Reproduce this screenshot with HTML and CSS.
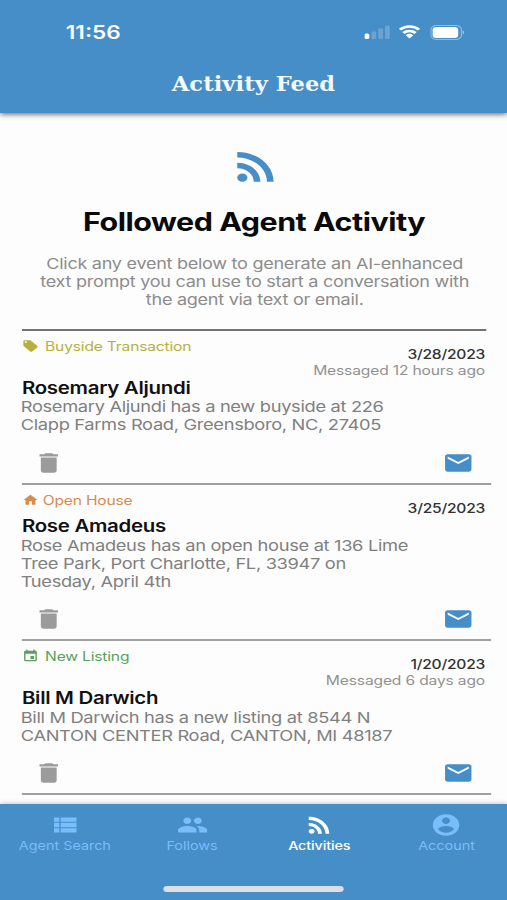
FILE: index.html
```html
<!doctype html>
<html lang="en">
<head>
<meta charset="utf-8">
<meta name="viewport" content="width=device-width,initial-scale=1">
<title>Activity Feed</title>
<link rel="stylesheet" href="styles.css">
</head>
<body>

<svg class="symbols" width="0" height="0">
	<symbol id="rss" viewBox="0 0 24 24"><circle cx="6.18" cy="17.82" r="2.18"/><path d="M4 4.44v2.83c7.03 0 12.73 5.7 12.73 12.73h2.83c0-8.59-6.97-15.56-15.56-15.56zm0 5.66v2.83c3.9 0 7.07 3.17 7.07 7.07h2.83c0-5.47-4.43-9.9-9.9-9.9z"/></symbol>
	<symbol id="trash" viewBox="0 0 24 24"><path d="M6 19c0 1.1.9 2 2 2h8c1.1 0 2-.9 2-2V7H6v12zM19 4h-3.500l-1-1h-5l-1 1H5v2h14V4z"/></symbol>
	<symbol id="mail" viewBox="0 0 24 24"><path d="M20 4H4c-1.100 0-2 .9-2 2v12c0 1.100.9 2 2 2h16c1.100 0 2-.9 2-2V6c0-1.100-.9-2-2-2zm0 4l-8 5-8-5V6l8 5 8-5v2z"/></symbol>
	<symbol id="tag" viewBox="0 0 24 24"><path d="M21.410 11.580l-9-9C12.050 2.220 11.550 2 11 2H4c-1.100 0-2 .9-2 2v7c0 .55.22 1.050.59 1.420l9 9c.36.36.86.58 1.410.58.55 0 1.050-.22 1.410-.59l7-7c.37-.36.59-.86.59-1.410 0-.55-.23-1.060-.59-1.420zM5.500 7C4.670 7 4 6.330 4 5.500S4.670 4 5.500 4 7 4.670 7 5.500 6.330 7 5.500 7z"/></symbol>
	<symbol id="home" viewBox="0 0 24 24"><path d="M10 20v-6h4v6h5v-8h3L12 3 2 12h3v8z"/></symbol>
	<symbol id="event" viewBox="0 0 24 24"><path d="M17 12h-5v5h5v-5zM16 1v2H8V1H6v2H5c-1.110 0-2 .9-2 2v14c0 1.100.89 2 2 2h14c1.100 0 2-.9 2-2V5c0-1.100-.9-2-2-2h-1V1h-2zm3 18H5V8h14v11z"/></symbol>
	<symbol id="list" viewBox="0 0 24 24"><path d="M4 14h4v-4H4v4zm0 5h4v-4H4v4zM4 9h4V5H4v4zm5 5h12v-4H9v4zm0 5h12v-4H9v4zM9 5v4h12V5H9z"/></symbol>
	<symbol id="people" viewBox="0 0 24 24"><path d="M16 11c1.660 0 2.990-1.340 2.990-3S17.660 5 16 5s-3 1.340-3 3 1.340 3 3 3zm-8 0c1.660 0 2.990-1.340 2.990-3S9.660 5 8 5 5 6.340 5 8s1.340 3 3 3zm0 2c-2.330 0-7 1.170-7 3.500V19h14v-2.500C15 14.170 10.330 13 8 13zm8 0c-.29 0-.62.02-.97.05 1.160.84 1.970 1.970 1.970 3.450V19h6v-2.500c0-2.330-4.670-3.500-7-3.500z"/></symbol>
	<symbol id="account" viewBox="0 0 24 24"><path d="M12 2C6.480 2 2 6.480 2 12s4.480 10 10 10 10-4.480 10-10S17.520 2 12 2zm0 3c1.660 0 3 1.340 3 3s-1.340 3-3 3-3-1.340-3-3 1.340-3 3-3zm0 14.200c-2.500 0-4.710-1.280-6-3.220.03-1.990 4-3.080 6-3.080 1.990 0 5.970 1.090 6 3.080-1.290 1.940-3.500 3.220-6 3.220z"/></symbol>
</svg>

<div class="screen">

	<header class="top">
		<div class="status">
			<span class="time">11:56</span>
			<svg class="signal" viewBox="0 0 21 14" width="21" height="14">
				<rect x="0" y="8.500" width="4" height="5.500" rx="1.500"/>
				<g opacity=".2">
					<rect x="5.800" y="6.500" width="3.800" height="7.500" rx="1.200"/>
					<rect x="11.400" y="3.500" width="3.800" height="10.500" rx="1.200"/>
					<rect x="17" y="0.500" width="3.800" height="13.500" rx="1.200"/>
				</g>
			</svg>
			<svg class="wifi" viewBox="0 0 18 14" width="18" height="14">
				<path class="arc" d="M1.200 4.700a11 11 0 0 1 15.600 0M4 8a7.200 7.200 0 0 1 10 0"/>
				<path d="M5.900 10.300a4.500 4.500 0 0 1 6.200 0L9 13.600z"/>
			</svg>
			<svg class="battery" viewBox="0 0 28 15" width="28" height="15">
				<rect class="shell" x=".6" y=".6" width="25" height="13.800" rx="4.200"/>
				<rect x="2" y="2" width="21" height="11" rx="3"/>
				<path class="cap" d="M26.600 5.300c1.600.6 1.600 3.800 0 4.400z"/>
			</svg>
		</div>
		<h1 class="title">Activity Feed</h1>
	</header>

	<main class="feed">

		<section class="intro">
			<svg class="logo"><use href="#rss"/></svg>
			<h2>Followed Agent Activity</h2>
			<p>Click any event below to generate an AI-enhanced<br>text prompt you can use to start a conversation with<br>the agent via text or email.</p>
		</section>

		<article class="item">
			<div class="meta">
				<div class="type buyside"><svg><use href="#tag"/></svg>Buyside Transaction</div>
				<div class="when"><b>3/28/2023</b><span class="msg">Messaged 12 hours ago</span></div>
			</div>
			<h3>Rosemary Aljundi</h3>
			<p>Rosemary Aljundi has a new buyside at 226<br>Clapp Farms Road, Greensboro, NC, 27405</p>
			<div class="actions">
				<svg class="trash"><use href="#trash"/></svg>
				<svg class="mail"><use href="#mail"/></svg>
			</div>
		</article>

		<article class="item">
			<div class="meta">
				<div class="type open"><svg><use href="#home"/></svg>Open House</div>
				<div class="when"><b>3/25/2023</b></div>
			</div>
			<h3>Rose Amadeus</h3>
			<p>Rose Amadeus has an open house at 136 Lime<br>Tree Park, Port Charlotte, FL, 33947 on<br>Tuesday, April 4th</p>
			<div class="actions">
				<svg class="trash"><use href="#trash"/></svg>
				<svg class="mail"><use href="#mail"/></svg>
			</div>
		</article>

		<article class="item">
			<div class="meta">
				<div class="type listing"><svg><use href="#event"/></svg>New Listing</div>
				<div class="when"><b>1/20/2023</b><span class="msg">Messaged 6 days ago</span></div>
			</div>
			<h3>Bill M Darwich</h3>
			<p>Bill M Darwich has a new listing at 8544 N<br>CANTON CENTER Road, CANTON, MI 48187</p>
			<div class="actions">
				<svg class="trash"><use href="#trash"/></svg>
				<svg class="mail"><use href="#mail"/></svg>
			</div>
		</article>

	</main>

	<footer class="bottom">
		<nav class="tabs">
			<div class="tab"><svg><use href="#list"/></svg><span>Agent Search</span></div>
			<div class="tab"><svg><use href="#people"/></svg><span>Follows</span></div>
			<div class="tab active"><svg><use href="#rss"/></svg><span>Activities</span></div>
			<div class="tab"><svg><use href="#account"/></svg><span>Account</span></div>
		</nav>
		<div class="homebar"></div>
	</footer>

</div>

</body>
</html>
```
FILE: styles.css
```css
* { box-sizing: border-box; }
body { background: #fdfdfd; font-family: Inter, "Liberation Sans", sans-serif; margin: 0; overflow: hidden; }
h1, h2, h3, p { margin: 0; }
svg { display: block; fill: currentColor; }
.symbols { position: absolute; }

.screen { display: flex; flex-direction: column; height: 900px; transform: scaleX(1.21875); transform-origin: 0 0; width: 416px; }

.top { background: #468ec8; box-shadow: 0 1px 5px rgba(0,0,0,.65); color: #fff; height: 113px; }
.status { align-items: center; display: flex; height: 64px; padding: 0 35px 0 54px; }
.time { flex: 1; font-size: 18.5px; font-weight: 600; }
.wifi { margin: 0 8px 0 7px; }
.arc { fill: none; stroke: #fff; stroke-width: 2.6; }
.shell { fill: none; opacity: .4; stroke: #fff; }
.cap { opacity: .45; }
.title { color: #f4f9ff; font: bold 20.5px/40px "DejaVu Serif Condensed", "DejaVu Serif", serif; letter-spacing: .1px; text-align: center; }

.feed { flex: 1; }
.intro { border-bottom: 2px solid #747474; height: 218px; margin: 0 17px 0 18px; padding-top: 30px; text-align: center; }
.logo { color: #468ec8; height: 47px; margin: 0 auto; padding-left: 2px; width: 48px; }
.intro h2 { color: #0a0a0a; font-size: 25px; font-weight: 700; letter-spacing: -.4px; line-height: 30px; margin-top: 17px; white-space: nowrap; }
.intro p { color: #8c8c8c; font-size: 14.8px; letter-spacing: -.22px; line-height: 18px; margin-top: 18px; padding-left: 1px; white-space: nowrap; }

.item { border-bottom: 2px solid #a0a0a0; margin: 0 13px 0 18px; }
.meta { display: flex; justify-content: space-between; padding-right: 5px; }
.type { display: flex; font-size: 12.8px; gap: 5px; letter-spacing: -.15px; line-height: 16px; padding-top: 8px; }
.type svg { height: 14px; width: 14px; }
.buyside { color: #b8b03a; }
.open { color: #d58c4e; }
.open svg { margin-right: -2px; }
.listing { color: #58a05c; }
.when { color: #919191; font-size: 12.8px; letter-spacing: -.13px; line-height: 16px; padding-top: 16px; text-align: right; }
.when b { color: #333; display: block; font-weight: 500; letter-spacing: -.2px; }
.msg { display: block; }
.item h3 { color: #111; font-size: 16.8px; font-weight: 600; letter-spacing: -.25px; line-height: 18px; }
.item p { color: #808080; font-size: 15px; letter-spacing: -.27px; line-height: 18px; margin-left: -1px; padding-top: 2px; white-space: nowrap; }
.item:nth-child(2) p { margin: -1px 0 1px -1px; }
.actions { align-items: center; display: flex; height: 48px; justify-content: space-between; padding: 8px 14px 0 9px; }
.trash { color: #9b9b9b; height: 26px; width: 26px; }
.mail { color: #468ec8; height: 26px; width: 26px; }

.bottom { background: #468ec8; box-shadow: 0 -1px 4px rgba(0,0,0,.2); color: #7abdfb; height: 96px; }
.tabs { display: grid; grid-template-columns: repeat(4, 104.4px); height: 82px; padding-left: 1px; }
.tab { align-items: center; display: flex; flex-direction: column; font-size: 11.8px; line-height: 16px; padding-top: 8px; }
.tab svg { height: 26px; width: 26px; }
.active { color: #fff; font-weight: 500; letter-spacing: -.1px; }
.homebar { background: #dcdfe4; border-radius: 3px; height: 6px; margin: 0 auto; width: 148px; }
```
